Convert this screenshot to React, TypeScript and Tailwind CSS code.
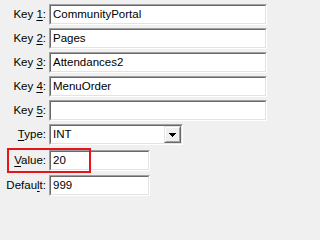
import React from "react";

const font = { fontFamily: '"Liberation Sans", Arial, sans-serif' };

function Sunken({ w, children }: { w: string; children?: React.ReactNode }) {
  return (
    <div className={`${w} h-[21px] border border-t-[#a0a0a0] border-l-[#a0a0a0] border-r-white border-b-white`}>
      <div className="h-full w-full border border-t-[#696969] border-l-[#696969] border-r-[#e3e3e3] border-b-[#e3e3e3] bg-white flex items-center pl-[2px] text-[11.5px] text-black leading-none">
        {children}
      </div>
    </div>
  );
}

function Label({ pre, u, post }: { pre: string; u: string; post: string }) {
  return (
    <div className="w-[46px] shrink-0 text-right text-[11.5px] text-black leading-none whitespace-nowrap">
      {pre}
      <span className="underline underline-offset-[2px]">{u}</span>
      {post}
    </div>
  );
}

export default function App() {
  return (
    <div className="relative w-full min-w-[272px] h-screen min-h-[200px] bg-[#f0f0f0] overflow-hidden" style={font}>
      <div className="flex flex-col pt-[4px]">
        <div className="flex items-center gap-[3px]">
          <Label pre="Key " u="1" post=":" />
          <Sunken w="w-[218px]">CommunityPortal</Sunken>
        </div>
        <div className="flex items-center gap-[3px] mt-[3px]">
          <Label pre="Key " u="2" post=":" />
          <Sunken w="w-[218px]">Pages</Sunken>
        </div>
        <div className="flex items-center gap-[3px] mt-[3px]">
          <Label pre="Key " u="3" post=":" />
          <Sunken w="w-[218px]">Attendances2</Sunken>
        </div>
        <div className="flex items-center gap-[3px] mt-[3px]">
          <Label pre="Key " u="4" post=":" />
          <Sunken w="w-[218px]">MenuOrder</Sunken>
        </div>
        <div className="flex items-center gap-[3px] mt-[3px]">
          <Label pre="Key " u="5" post=":" />
          <Sunken w="w-[218px]"></Sunken>
        </div>
        <div className="flex items-center gap-[3px] mt-[3px]">
          <Label pre="" u="T" post="ype:" />
          <div className="w-[134px] h-[21px] border border-t-[#a0a0a0] border-l-[#a0a0a0] border-r-white border-b-white">
            <div className="h-full w-full border border-t-[#696969] border-l-[#696969] border-r-[#e3e3e3] border-b-[#e3e3e3] bg-white flex items-center">
              <div className="flex-1 pl-[2px] text-[11.5px] text-black leading-none">INT</div>
              <div className="w-[17px] h-full border border-t-[#e3e3e3] border-l-[#e3e3e3] border-r-[#696969] border-b-[#696969] bg-[#f0f0f0]">
                <div className="h-full w-full border border-t-white border-l-white border-r-[#a0a0a0] border-b-[#a0a0a0] flex items-center justify-center">
                  <svg width="7" height="4" viewBox="0 0 7 4">
                    <path d="M0 0h7v1H6v1H5v1H4v1H3V3H2V2H1V1H0z" fill="#000" />
                  </svg>
                </div>
              </div>
            </div>
          </div>
        </div>
        <div className="flex items-center gap-[3px] mt-[5px]">
          <Label pre="" u="V" post="alue:" />
          <Sunken w="w-[101px]">20</Sunken>
        </div>
        <div className="flex items-center gap-[3px] mt-[4px]">
          <Label pre="Defau" u="l" post="t:" />
          <Sunken w="w-[101px]">999</Sunken>
        </div>
      </div>
      <div className="absolute left-[7px] top-[148px] w-[84px] h-[25px] border-2 border-[#e8141b]" />
    </div>
  );
}
